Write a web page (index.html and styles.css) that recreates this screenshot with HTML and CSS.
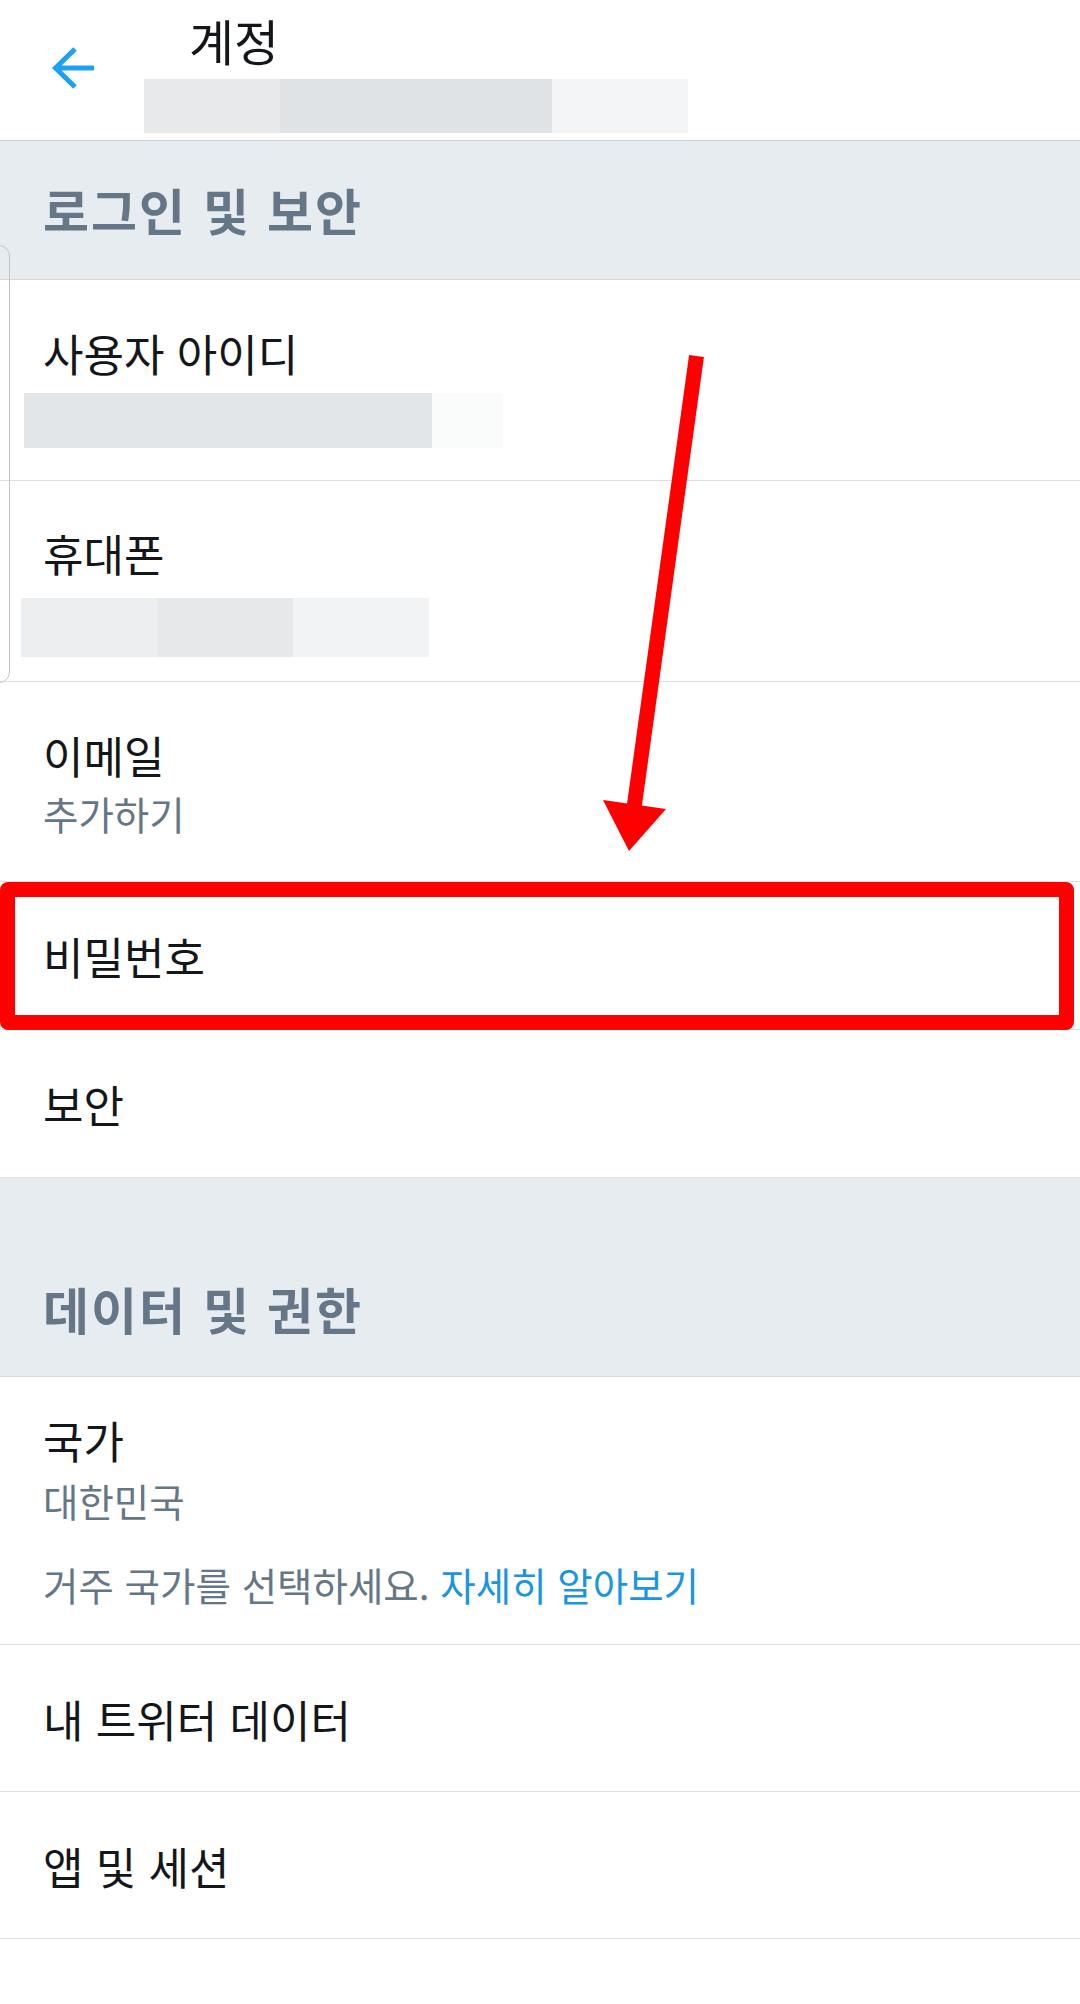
FILE: index.html
```html
<!DOCTYPE html>
<html lang="ko">
<head>
<meta charset="utf-8">
<title>계정</title>
<link rel="stylesheet" href="styles.css">
</head>
<body>
<div class="page">
  <header class="appbar">
    <div class="back">
      <svg class="back-icon" viewBox="0 0 48 48" width="48" height="48">
        <path d="M6 24 H45 M26 5 L6.5 24 L26 43" fill="none" stroke="#1da1f2" stroke-width="5" stroke-linejoin="miter"/>
      </svg>
    </div>
    <div class="titles">
      <div class="title">계정</div>
      <div class="blur blur-head">
        <span class="seg s1"></span><span class="seg s2"></span><span class="seg s3"></span>
      </div>
    </div>
  </header>

  <section class="group">
    <div class="group-head first"><span>로그인 및 보안</span></div>
    <div class="row row-id">
      <div class="label">사용자 아이디</div>
      <div class="blur blur-id">
        <span class="seg s1"></span><span class="seg s2"></span><span class="seg s3"></span>
      </div>
    </div>
    <div class="row row-phone">
      <div class="label">휴대폰</div>
      <div class="blur blur-phone">
        <span class="seg s1"></span><span class="seg s2"></span><span class="seg s3"></span>
      </div>
    </div>
    <div class="row row-email">
      <div class="label">이메일</div>
      <div class="sub">추가하기</div>
    </div>
    <div class="row single">
      <div class="label">비밀번호</div>
    </div>
    <div class="row single">
      <div class="label">보안</div>
    </div>
  </section>

  <section class="group">
    <div class="group-head second"><span>데이터 및 권한</span></div>
    <div class="row row-country">
      <div class="label">국가</div>
      <div class="sub">대한민국</div>
      <div class="info">거주 국가를 선택하세요. <span class="link">자세히 알아보기</span></div>
    </div>
    <div class="row single short">
      <div class="label">내 트위터 데이터</div>
    </div>
    <div class="row single short">
      <div class="label">앱 및 세션</div>
    </div>
  </section>

  <div class="edge"></div>
  <div class="highlight"></div>
  <svg class="pointer" viewBox="0 0 1080 2004" width="1080" height="2004">
    <line x1="696.5" y1="356" x2="634" y2="808" stroke="#ff0000" stroke-width="15"/>
    <polygon points="603,800 666,809 629,851" fill="#ff0000"/>
  </svg>
</div>
</body>
</html>
```

FILE: styles.css
```css
* { box-sizing: border-box; }

html, body {
  margin: 0;
  padding: 0;
  background: #ffffff;
}

body {
  font-family: "Noto Sans CJK KR", "Noto Sans", sans-serif;
  color: #14171a;
}

.page {
  position: relative;
  width: 1080px;
  min-height: 2004px;
  overflow: hidden;
}

/* app bar */
.appbar {
  display: flex;
  height: 141px;
  border-bottom: 1.5px solid #ccd3d9;
}

.back {
  width: 144px;
  flex: none;
}

.back-icon {
  display: block;
  margin: 44px 0 0 49px;
}

.titles {
  display: flex;
  flex-direction: column;
}

.title {
  font-size: 49px;
  line-height: 56px;
  margin: 12px 0 0 45px;
  color: #14171a;
}

.blur {
  display: flex;
}

.seg { display: block; height: 100%; }

.blur-head {
  height: 54px;
  margin-top: 11px;
}
.blur-head .s1 { width: 136px; background: #e7e9eb; }
.blur-head .s2 { width: 272px; background: #dfe3e6; }
.blur-head .s3 { width: 136px; background: #f4f5f7; }

/* section heads */
.group-head {
  background: #e6ecf0;
  border-bottom: 1.5px solid #d3d9de;
  padding: 0 43px;
  font-size: 50px;
  line-height: 56px;
  letter-spacing: 2px;
  font-weight: 700;
  color: #657786;
}
.group-head.first { padding-top: 40px; padding-bottom: 42px; height: 139px; }
.group-head.second { padding-top: 102px; padding-bottom: 40px; height: 199px; }

/* rows */
.row {
  padding: 0 43px;
  border-bottom: 1.5px solid #dde1e4;
}

.label {
  font-size: 44px;
  line-height: 52px;
  color: #14171a;
}

.sub, .info {
  font-size: 38.5px;
  line-height: 44px;
  color: #657786;
}

.link { color: #1b95e0; }

.row-id { height: 201px; padding-top: 47px; }
.blur-id { height: 55px; margin: 14px 0 0 -19px; }
.blur-id .s1 { width: 276px; background: #e3e6e8; }
.blur-id .s2 { width: 132px; background: #e3e6e8; }
.blur-id .s3 { width: 71px; background: #fafbfb; }

.row-phone { height: 201px; padding-top: 46px; }
.blur-phone { height: 59px; margin: 19px 0 0 -22px; }
.blur-phone .s1 { width: 136px; background: #eceef0; }
.blur-phone .s2 { width: 136px; background: #e6e8ea; }
.blur-phone .s3 { width: 136px; background: #f2f3f5; }

.row-email { height: 200px; padding-top: 47px; }
.row-email .sub { margin-top: 10px; }

.single { height: 148px; padding-top: 48px; }
.single.short { height: 147px; }

.row-country { height: 268px; padding-top: 37px; }
.row-country .sub { margin-top: 12px; }
.row-country .info { margin-top: 40px; }

/* overlays: screenshot edge artifact and annotations */
.edge {
  position: absolute;
  left: -12px;
  top: 245px;
  width: 22px;
  height: 438px;
  border: 1.5px solid #c2c5c8;
  border-radius: 12px;
}

.highlight {
  position: absolute;
  left: 0;
  top: 882px;
  width: 1074px;
  height: 148px;
  border: 15px solid #ff0000;
  border-radius: 8px;
}

.pointer {
  position: absolute;
  left: 0;
  top: 0;
  pointer-events: none;
}
```
